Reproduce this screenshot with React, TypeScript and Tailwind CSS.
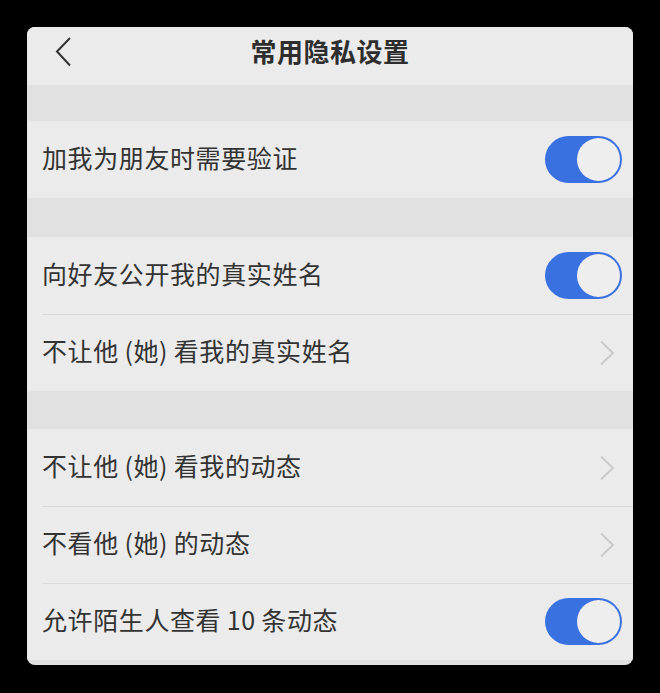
import React from "react";

type Row = { label: string; kind: "toggle" | "link" };

// thin spaces keep the mixed Latin/CJK labels tight
const groups: Row[][] = [
  [{ label: "加我为朋友时需要验证", kind: "toggle" }],
  [
    { label: "向好友公开我的真实姓名", kind: "toggle" },
    { label: "不让他\u2009(她)\u2009看我的真实姓名", kind: "link" },
  ],
  [
    { label: "不让他\u2009(她)\u2009看我的动态", kind: "link" },
    { label: "不看他\u2009(她)\u2009的动态", kind: "link" },
    { label: "允许陌生人查看\u200910\u2009条动态", kind: "toggle" },
  ],
];

const gaps = ["h-[36px]", "h-[39px]", "h-[38px]"];

function Toggle() {
  return (
    <div className="w-[77px] h-[47px] rounded-full bg-[#3a71e0] flex items-center justify-end pr-[2px]">
      <div className="w-[43px] h-[43px] rounded-full bg-[#eeeeee]" />
    </div>
  );
}

function Chevron() {
  return (
    <svg width="16" height="26" viewBox="0 0 16 26" className="mr-[7px]">
      <path d="M2 1.5 L14 13 L2 24.5" fill="none" stroke="#c9c9c9" strokeWidth="1.8" />
    </svg>
  );
}

export default function App() {
  return (
    <div
      className="w-[660px] h-[693px] bg-black pt-[27px] px-[27px]"
      style={{ fontFamily: '"Noto Sans CJK SC", "Noto Sans", sans-serif' }}
    >
      <div className="h-[638px] rounded-[8px] overflow-hidden bg-[#e1e1e1] flex flex-col">
        {/* nav bar */}
        <div className="h-[58px] shrink-0 bg-[#ebebeb] relative flex items-center justify-center pb-[11px]">
          <svg width="20" height="32" viewBox="0 0 20 32" className="absolute left-[27px] top-[9px]">
            <path d="M16 2 L3 15.5 L16 29.5" fill="none" stroke="#333333" strokeWidth="2" />
          </svg>
          <span className="text-[26px] font-semibold text-[#2e2e2e] tracking-[0.5px]">常用隐私设置</span>
        </div>

        {groups.map((rows, gi) => (
          <div key={gi}>
            <div className={gaps[gi]} />
            <div className="bg-[#ebebeb]">
              {rows.map((row, ri) => (
                <div key={ri} className="relative h-[77px] flex items-center justify-between pl-[15px] pr-[11px]">
                  {ri > 0 && <div className="absolute top-0 left-[15px] right-0 h-px bg-[#dadada]" />}
                  <span className="text-[25px] text-[#333333] tracking-[0.6px] mb-[3px]">{row.label}</span>
                  {row.kind === "toggle" ? <Toggle /> : <Chevron />}
                </div>
              ))}
            </div>
          </div>
        ))}
      </div>
    </div>
  );
}
